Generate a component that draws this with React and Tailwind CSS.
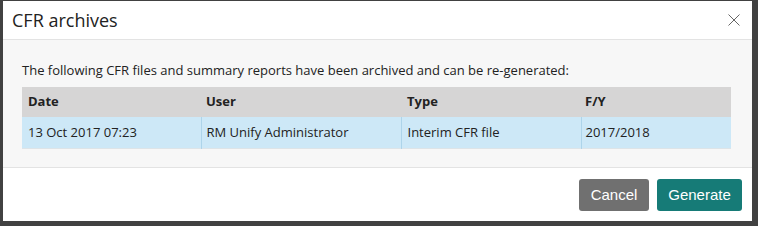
const rows = [
  { date: '13 Oct 2017 07:23', user: 'RM Unify Administrator', type: 'Interim CFR file', fy: '2017/2018' },
];

function CloseIcon() {
  return (
    <svg width="12" height="12" viewBox="0 0 12 12" className="text-[#666]">
      <path d="M0.5 0.5 L11.5 11.5 M11.5 0.5 L0.5 11.5" stroke="currentColor" strokeWidth="1" fill="none" />
    </svg>
  );
}

export default function App() {
  return (
    <div className="h-[226px] w-[758px] bg-[#414141] pl-[3px] pt-[1px] font-['Open_Sans',sans-serif]">
      <div className="flex h-[220px] w-[749px] flex-col bg-white">
        <div className="flex h-[39px] shrink-0 items-center justify-between border-b border-[#e3e3e3] pl-[9px] pr-[12px]">
          <h2 className="text-[18px] leading-none text-[#222]">CFR archives</h2>
          <CloseIcon />
        </div>

        <div className="h-[128px] shrink-0 border-b border-[#e3e3e3] bg-[#f7f7f7] px-[19px] pt-[21px]">
          <p className="text-[13px] leading-[18px] text-[#222]">
            The following CFR files and summary reports have been archived and can be re-generated:
          </p>
          <table className="mt-[8px] w-[709px] table-fixed border-collapse text-left text-[13px] text-[#222]">
            <colgroup>
              <col className="w-[179px]" />
              <col className="w-[200px]" />
              <col className="w-[180px]" />
              <col className="w-[150px]" />
            </colgroup>
            <thead>
              <tr className="h-[30px] bg-[#d6d5d5]">
                <th className="px-[6px] font-bold">Date</th>
                <th className="px-[5px] font-bold">User</th>
                <th className="px-[6px] font-bold">Type</th>
                <th className="px-[4px] font-bold">F/Y</th>
              </tr>
            </thead>
            <tbody>
              {rows.map((row) => (
                <tr key={row.date} className="h-[31px] border-b border-[#dde4e8] bg-[#cde8f7]">
                  <td className="px-[6px]">{row.date}</td>
                  <td className="border-l border-[#add4ea] px-[5px]">{row.user}</td>
                  <td className="border-l border-[#add4ea] px-[6px]">{row.type}</td>
                  <td className="border-l border-[#add4ea] px-[4px]">{row.fy}</td>
                </tr>
              ))}
            </tbody>
          </table>
        </div>

        <div className="flex flex-1 items-start justify-end gap-[8px] pr-[10px] pt-[11px] font-['Liberation_Sans',sans-serif]">
          <button className="h-[32px] w-[70px] rounded-[3px] bg-[#707070] text-[15px] text-white">Cancel</button>
          <button className="h-[32px] w-[85px] rounded-[3px] bg-[#167b77] text-[15px] text-white">Generate</button>
        </div>
      </div>
    </div>
  );
}
